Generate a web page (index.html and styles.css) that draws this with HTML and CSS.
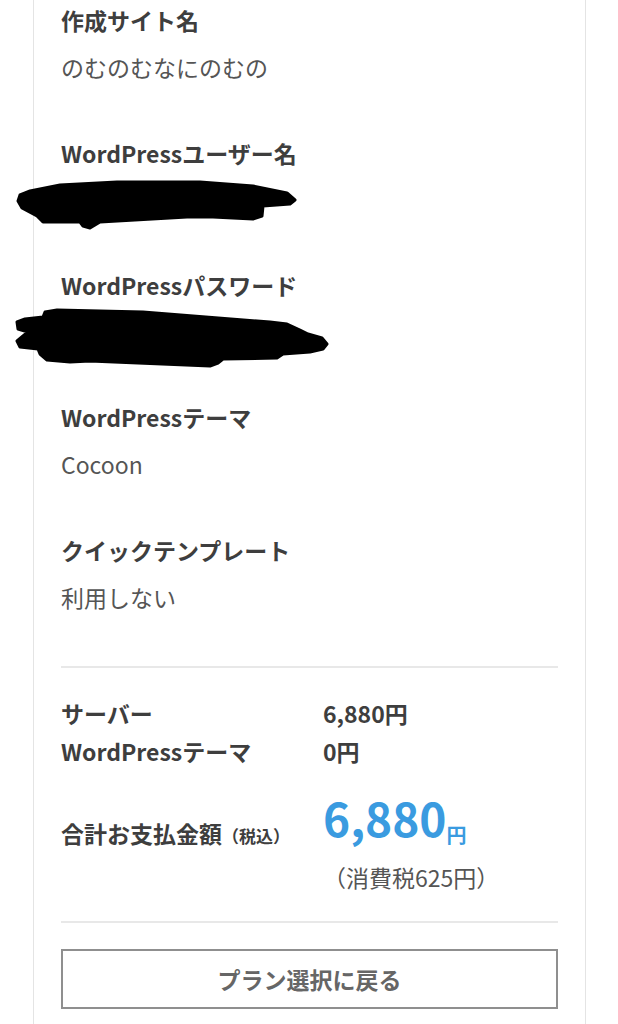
FILE: index.html
```html
<!DOCTYPE html>
<html lang="ja">
<head>
    <meta charset="UTF-8">
    <meta name="viewport" content="width=device-width, initial-scale=1.0">
    <title>お申し込み内容の確認</title>
    <link rel="stylesheet" href="styles.css">
</head>
<body>

    <div class="card">
        <!-- Site settings -->
        <div class="field">
            <p class="label">作成サイト名</p>
            <p class="value">のむのむなにのむの</p>
        </div>

        <div class="field secret">
            <p class="label">WordPressユーザー名</p>
            <div class="value mask">
                <svg width="320" height="34" viewBox="17 184 320 34">
                    <path d="M20 196 L30 192 L60 186 L117 183 L200 183 L253 187 L287 194 L295 201 L290 205 L263 207 L262 217 L253 220 L213 218 L187 218 L100 223 L90 229 L83 227 L80 223 L43 223 L37 217 L22 209 L18 202 Z"/>
                </svg>
            </div>
        </div>

        <div class="field secret">
            <p class="label">WordPressパスワード</p>
            <div class="value mask">
                <svg width="320" height="34" viewBox="17 316 320 34">
                    <path d="M45 313 L57 311 L143 313 L270 323 L287 325 L300 331 L308 335 L322 339 L327 345 L323 350 L310 353 L283 355 L277 359 L223 360 L218 364 L210 367 L90 362 L70 363 L47 361 L40 355 L38 350 L20 348 L17 342 L23 337 L28 333 L18 330 L17 323 L25 320 L43 318 Z"/>
                </svg>
            </div>
        </div>

        <div class="field">
            <p class="label">WordPressテーマ</p>
            <p class="value">Cocoon</p>
        </div>

        <div class="field">
            <p class="label">クイックテンプレート</p>
            <p class="value">利用しない</p>
        </div>

        <hr class="divider">

        <!-- Price summary -->
        <div class="prices">
            <div class="price-row">
                <span class="price-name">サーバー</span>
                <span class="price-num">6,880円</span>
            </div>
            <div class="price-row">
                <span class="price-name">WordPressテーマ</span>
                <span class="price-num">0円</span>
            </div>
        </div>

        <div class="total">
            <span class="price-name">合計お支払金額<small>（税込）</small></span>
            <div class="total-value">
                <p class="total-amount"><span class="big">6,880</span>円</p>
                <p class="tax">（消費税625円）</p>
            </div>
        </div>

        <hr class="divider">

        <button class="back-btn">プラン選択に戻る</button>
    </div>

</body>
</html>
```

FILE: styles.css
```css
* {
    margin: 0;
    padding: 0;
    box-sizing: border-box;
}

body, html {
    background: #fff;
    font-family: "Noto Sans CJK JP", "Noto Sans", sans-serif;
    color: #3e3e3e;
}

/* Card with side borders (scrolled, top is off screen) */
.card {
    margin-left: 33px;
    width: 553px;
    min-height: 1024px;
    padding: 3px 27px 0 27px;
    border-left: 1px solid #e4e4e4;
    border-right: 1px solid #e4e4e4;
}

.field {
    margin-bottom: 52px;
}

.field.secret {
    margin-bottom: 51px;
}

.label {
    font-size: 23px;
    font-weight: bold;
    line-height: 34px;
    margin-bottom: 13px;
}

.value {
    font-size: 23px;
    line-height: 34px;
    color: #555;
}

/* Hand-drawn redaction over the value */
.mask svg {
    display: block;
    margin-left: -44px;
    overflow: visible;
}

.mask path {
    fill: #000;
    stroke: #000;
    stroke-width: 3;
    stroke-linejoin: round;
}

.divider {
    border: none;
    border-top: 2px solid #e8e8e8;
}

.prices {
    padding-top: 26px;
}

.price-row {
    display: flex;
    font-size: 23px;
    font-weight: bold;
    line-height: 38px;
}

.price-name {
    width: 262px;
    flex-shrink: 0;
    font-size: 23px;
    font-weight: bold;
}

.price-name small {
    font-size: 17px;
}

.price-num {
    font-weight: bold;
}

.total {
    display: flex;
    align-items: baseline;
    margin-top: 30px;
    margin-bottom: 27px;
    line-height: 34px;
}

.total-amount {
    color: #3a9be0;
    font-weight: bold;
    font-size: 20px;
}

.total-amount .big {
    font-size: 46px;
    vertical-align: 6px;
    line-height: 34px;
}

.tax {
    font-size: 23px;
    color: #555;
    line-height: 34px;
    margin-top: 8px;
}

.back-btn {
    display: block;
    width: 100%;
    height: 60px;
    margin-top: 26px;
    background: #fff;
    border: 2px solid #8f8f8f;
    font-family: inherit;
    font-size: 23px;
    font-weight: bold;
    color: #666;
}
```
